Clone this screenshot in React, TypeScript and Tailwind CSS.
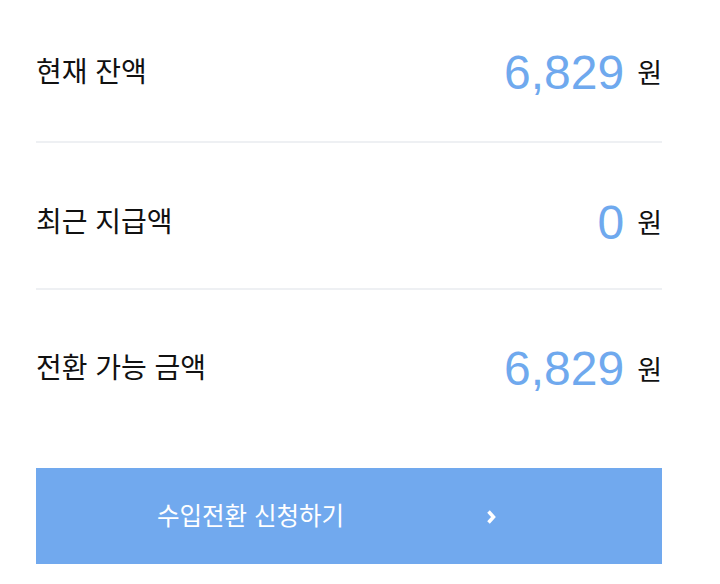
const rows = [
  { label: "현재 잔액", value: "6,829" },
  { label: "최근 지급액", value: "0" },
  { label: "전환 가능 금액", value: "6,829" },
];

const kr = "font-['Liberation_Sans','Noto_Sans_CJK_KR',sans-serif]";

function Row({ label, value, cls }: { label: string; value: string; cls: string }) {
  return (
    <div className={`flex items-center justify-between ${cls}`}>
      <span className="text-[28px] text-[#111] leading-none">{label}</span>
      <div className="flex items-center">
        <span className="text-[48px] leading-none text-[#6fa9ee] font-['Liberation_Sans',sans-serif]">{value}</span>
        <span className="ml-[13px] mt-[4px] text-[27px] leading-none text-[#111]">원</span>
      </div>
    </div>
  );
}

export default function App() {
  return (
    <div className={`w-[720px] h-[584px] bg-white pl-[36px] pr-[58px] ${kr}`}>
      <Row {...rows[0]} cls="h-[141px] pt-[4px]" />
      <div className="h-[2px] bg-[#eef0f3]" />
      <Row {...rows[1]} cls="h-[145px] pt-[14px]" />
      <div className="h-[2px] bg-[#eef0f3]" />
      <Row {...rows[2]} cls="h-[160px] pb-[2px]" />
      <button className="mt-[18px] w-full h-[96px] bg-[#71a9ee] flex items-center pl-[121px] text-white">
        <span className="text-[24.5px] leading-none mt-[2px]">수입전환 신청하기</span>
        <svg width="11" height="18" viewBox="0 0 11 18" className="ml-[142px] mt-[2px]">
          <path d="M2.5 3.5 L7.5 9 L2.5 14.5" fill="none" stroke="white" strokeWidth="3.5" />
        </svg>
      </button>
    </div>
  );
}
